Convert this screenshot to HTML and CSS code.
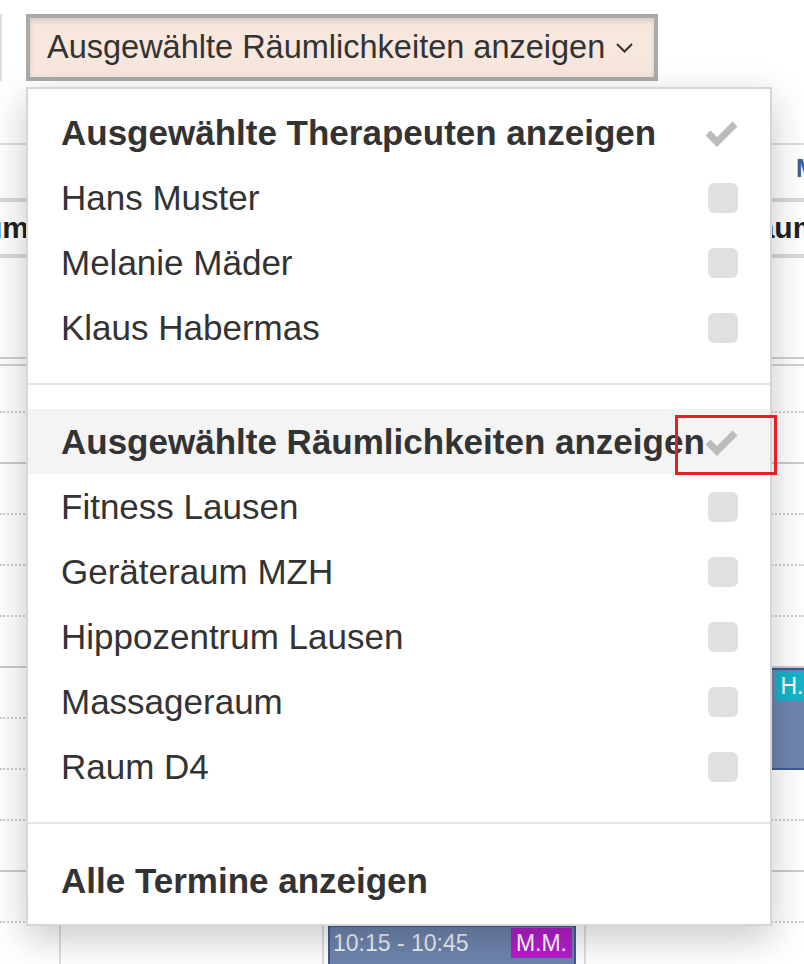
FILE: index.html
```html
<!DOCTYPE html>
<html lang="de">
<head>
    <meta charset="UTF-8">
    <meta name="viewport" content="width=device-width, initial-scale=1.0">
    <title>Terminkalender</title>
    <link rel="stylesheet" href="styles.css">
</head>
<body>
    <div class="toolbar">
        <div class="btn-prev"></div>
        <div class="filter">
            <button class="filter-btn">
                Ausgewählte Räumlichkeiten anzeigen
                <svg class="caret" width="17" height="10" viewBox="0 0 17 10"><polyline points="1,1 8.5,8.5 16,1" fill="none" stroke="#333" stroke-width="2"/></svg>
            </button>
            <ul class="filter-menu">
                <li class="item head">
                    <span>Ausgewählte Therapeuten anzeigen</span>
                    <svg class="check" width="32" height="26" viewBox="0 0 32 26"><path d="M2 12 L11 21 L29 3" fill="none" stroke="#bbb" stroke-width="7"/></svg>
                </li>
                <li class="item"><span>Hans Muster</span><span class="box"></span></li>
                <li class="item"><span>Melanie Mäder</span><span class="box"></span></li>
                <li class="item"><span>Klaus Habermas</span><span class="box"></span></li>
                <li class="divider"></li>
                <li class="item head active">
                    <span>Ausgewählte Räumlichkeiten anzeigen</span>
                    <svg class="check" width="32" height="26" viewBox="0 0 32 26"><path d="M2 12 L11 21 L29 3" fill="none" stroke="#bbb" stroke-width="7"/></svg>
                    <span class="marker"></span>
                </li>
                <li class="item"><span>Fitness Lausen</span><span class="box"></span></li>
                <li class="item"><span>Geräteraum MZH</span><span class="box"></span></li>
                <li class="item"><span>Hippozentrum Lausen</span><span class="box"></span></li>
                <li class="item"><span>Massageraum</span><span class="box"></span></li>
                <li class="item"><span>Raum D4</span><span class="box"></span></li>
                <li class="divider"></li>
                <li class="item head"><span>Alle Termine anzeigen</span></li>
            </ul>
        </div>
    </div>

    <div class="calendar">
        <div class="cal-row cal-days">
            <div></div>
            <div></div>
            <div></div>
            <div class="day">Mi 14.03.</div>
        </div>
        <div class="cal-row cal-rooms">
            <div class="room first">Raum</div>
            <div></div>
            <div></div>
            <div class="room last">Raum D4</div>
        </div>
        <div class="cal-allday"></div>
        <div class="cal-body">
            <div class="slot first"></div>
            <div class="slot hour"></div>
            <div class="slot"></div>
            <div class="slot"></div>
            <div class="slot"></div>
            <div class="slot hour"></div>
            <div class="slot"></div>
            <div class="slot"></div>
            <div class="slot"></div>
            <div class="slot hour"></div>
            <div class="slot"></div>
            <div class="slot"></div>

            <div class="cal-cols">
                <div class="col"></div>
                <div class="col line"></div>
                <div class="col line">
                    <div class="event" style="top: 559px; height: 80px;">
                        <span>10:15 - 10:45</span>
                        <span class="tag mm">M.M.</span>
                    </div>
                </div>
                <div class="col line">
                    <div class="event" style="top: 302px; height: 102px;">
                        <span>09:00 - 09:30</span>
                        <span class="tag hm">H.M.</span>
                    </div>
                </div>
            </div>
        </div>
    </div>
</body>
</html>
```

FILE: styles.css
```css
body {
    margin: 0;
    font-family: "Liberation Sans", Arial, sans-serif;
    color: #333;
    background-color: #fff;
    overflow: hidden;
}

/* toolbar */

.toolbar {
    display: flex;
    gap: 24px;
    padding: 14px 0 62px;
}

.btn-prev {
    width: 0;
    height: 67px;
    border-right: 2px solid #ddd;
}

.filter {
    position: relative;
}

.filter-btn {
    display: flex;
    align-items: center;
    gap: 11px;
    box-sizing: border-box;
    height: 67px;
    padding: 0 21px 0 17px;
    border: 4px solid #aaa;
    background-color: #f7e7dc;
    box-shadow: inset 0 3px 5px rgba(0, 0, 0, 0.125);
    font-family: "Liberation Sans", Arial, sans-serif;
    font-size: 32.5px;
    color: #333;
    white-space: nowrap;
}

/* dropdown */

.filter-menu {
    position: absolute;
    top: 73px;
    left: 0;
    z-index: 10;
    box-sizing: border-box;
    width: 746px;
    margin: 0;
    padding: 11px 0;
    list-style: none;
    background-color: #fff;
    border: 2px solid #d6d6d6;
    box-shadow: 0 12px 36px rgba(0, 0, 0, 0.22);
}

.filter-menu .item {
    position: relative;
    display: flex;
    align-items: center;
    justify-content: space-between;
    height: 65px;
    padding: 0 32px 0 33px;
    font-size: 35px;
    white-space: nowrap;
}

.filter-menu .head {
    font-weight: bold;
}

.filter-menu .active {
    background-color: #f4f4f4;
}

.filter-menu .check {
    flex-shrink: 0;
    margin-top: 3px;
}

.filter-menu .box {
    flex-shrink: 0;
    width: 30px;
    height: 30px;
    border-radius: 6px;
    background-color: #e0e0e0;
}

.filter-menu .divider {
    height: 2px;
    margin: 23px 0 24px;
    background-color: #e5e5e5;
}

.marker {
    position: absolute;
    top: 6px;
    left: 647px;
    box-sizing: border-box;
    width: 102px;
    height: 60px;
    border: 3px solid #e61e26;
}

/* calendar */

.cal-row {
    display: grid;
    grid-template-columns: 59px 263px 262px 1fr;
    align-items: center;
    white-space: nowrap;
}

.cal-days {
    height: 53px;
    border-top: 2px solid #ddd;
    border-bottom: 4px solid #d9d9d9;
}

.day {
    padding-left: 212px;
    margin-top: -6px;
    font-size: 25px;
    font-weight: bold;
    color: #3e5c9c;
}

.cal-rooms {
    height: 52px;
    border-bottom: 4px solid #d9d9d9;
}

.room {
    font-size: 30px;
    font-weight: bold;
    color: #222;
}

.room.first {
    direction: rtl;
    padding-right: 30px;
}

.room.last {
    padding-left: 152px;
}

.cal-allday {
    height: 99px;
    margin-bottom: 5px;
    border-bottom: 2px solid #d0d0d0;
}

.cal-body {
    position: relative;
    border-top: 2px solid #d0d0d0;
}

.slot {
    height: 49px;
    border-bottom: 2px dotted #ccc;
}

.slot.first {
    height: 45px;
}

.slot.hour {
    border-bottom-style: solid;
}

.cal-cols {
    position: absolute;
    inset: 0;
    display: grid;
    grid-template-columns: 59px 263px 262px 1fr;
}

.col {
    position: relative;
}

.col.line {
    border-left: 2px solid #ddd;
}

.event {
    position: absolute;
    left: 4px;
    display: flex;
    justify-content: space-between;
    align-items: flex-start;
    box-sizing: border-box;
    width: 248px;
    padding: 1px 2px 0 3px;
    background-color: #6f84ae;
    border: 2px solid #3f5b94;
    color: #eee;
    font-size: 23px;
    line-height: 30px;
    white-space: nowrap;
}

.tag {
    padding: 0 5px;
    color: #fff;
}

.tag.mm {
    background-color: #b41dcb;
}

.tag.hm {
    background-color: #17b3c9;
}
```
